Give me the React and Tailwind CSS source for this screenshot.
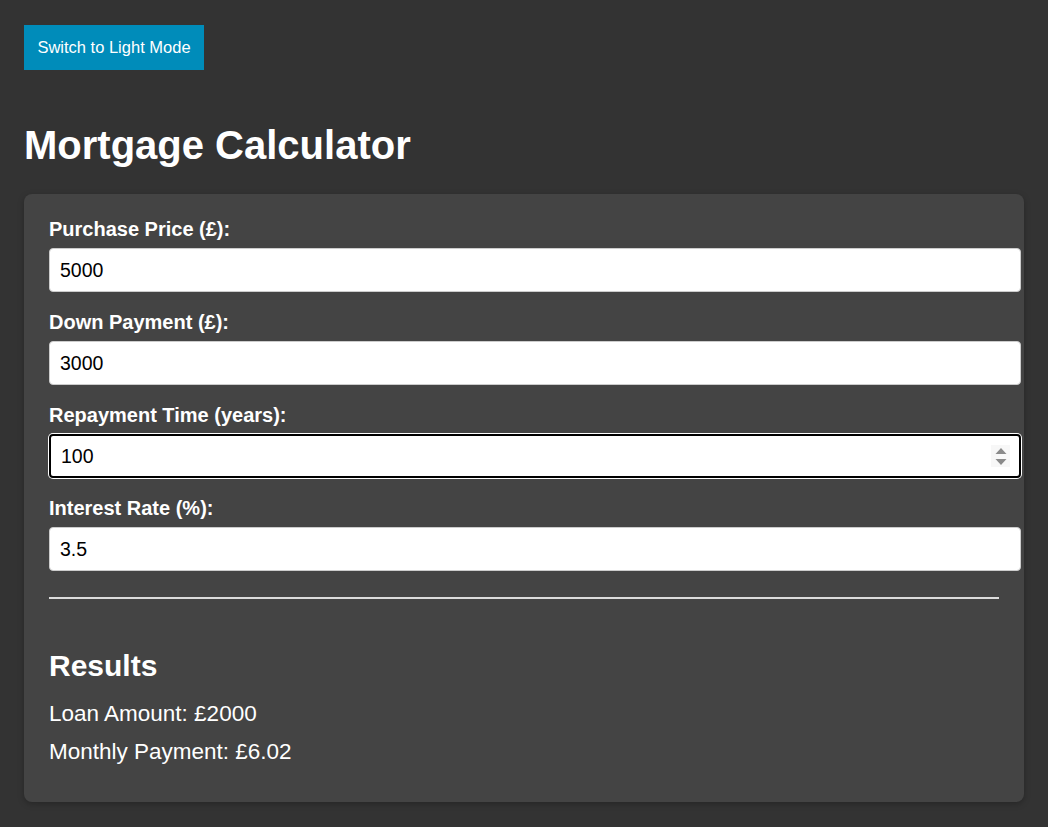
import React from "react";

const font = { fontFamily: '"Liberation Sans", Arial, sans-serif' };

function Field({ label, value, focused }) {
  return (
    <div className="mb-[19px]">
      <label className="block text-[20px] leading-[23px] font-bold text-white mb-[7px]">{label}</label>
      <div className="relative w-[calc(100%+22px)]">
        <input
          readOnly
          value={value}
          className={
            "block w-full h-[44px] px-[10px] text-[19.5px] text-black bg-white rounded-[4px] outline-none " +
            (focused
              ? "border-2 border-black ring-1 ring-white px-[9px]"
              : "border border-[#ccc]")
          }
          style={font}
        />
        {focused && (
          <div className="absolute right-[11px] top-[11px] w-[19px] h-[22px] bg-[#f7f7f7] flex items-center justify-center">
            <svg width="12" height="20" viewBox="0 0 12 20">
              <path d="M6 2 L11.5 8 L0.5 8 Z" fill="#8a8a8a" />
              <path d="M0.5 13 L11.5 13 L6 19 Z" fill="#8a8a8a" />
            </svg>
          </div>
        )}
      </div>
    </div>
  );
}

export default function App() {
  return (
    <div className="min-h-[827px] bg-[#333333] px-6 pt-[25px] pb-6" style={font}>
      <button className="block w-[180px] h-[45px] bg-[#008CBA] text-white text-[16.5px]">
        Switch to Light Mode
      </button>
      <h1 className="mt-[52px] text-[40px] leading-[46px] font-bold text-white">Mortgage Calculator</h1>
      <div className="mt-[26px] bg-[#444444] rounded-lg pl-[25px] pr-[25px] pt-[24px] pb-[38px] shadow-[0_2px_6px_rgba(0,0,0,0.25)]">
        <Field label="Purchase Price (£):" value="5000" />
        <Field label="Down Payment (£):" value="3000" />
        <Field label="Repayment Time (years):" value="100" focused />
        <Field label="Interest Rate (%):" value="3.5" />
        <div className="mt-[26px] h-[2px] bg-[#dcdcdc]" />
        <h2 className="mt-[50px] text-[30px] leading-[34px] font-bold text-white">Results</h2>
        <p className="mt-[18px] text-[22.5px] leading-[25px] text-white">Loan Amount: £2000</p>
        <p className="mt-[13px] text-[22.5px] leading-[25px] text-white">Monthly Payment: £6.02</p>
      </div>
    </div>
  );
}
